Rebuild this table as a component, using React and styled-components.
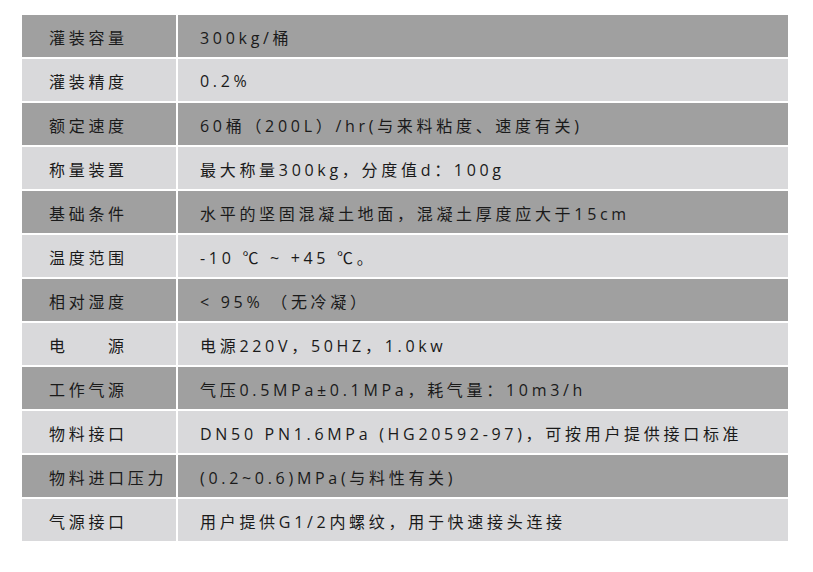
import React from 'react'
import styled, { createGlobalStyle } from 'styled-components'

const GlobalStyle = createGlobalStyle`
  html, body {
    margin: 0;
    padding: 0;
    background: #ffffff;
  }
  body {
    font-family: "Open Sans", "Noto Sans CJK SC", sans-serif;
  }
`

const Page = styled.div`
  width: 813px;
  height: 572px;
  padding: 15px 25px 0 22px;
  box-sizing: border-box;
`

const SpecTable = styled.div`
  display: grid;
  grid-template-columns: 154px 1fr;
  column-gap: 2px;
  row-gap: 2px;
  width: 766px;
`

const Cell = styled.div`
  height: 42px;
  display: flex;
  align-items: center;
  box-sizing: border-box;
  padding-left: ${p => (p.$label ? '27px' : '22px')};
  padding-top: 2px;
  background: ${p => (p.$dark ? '#a0a0a0' : '#d9d9db')};
  color: #1a1a1a;
  font-size: 16px;
  font-weight: 400;
  letter-spacing: 3.7px;
  white-space: pre;
`

const rows = [
  ['灌装容量', '300kg/桶'],
  ['灌装精度', '0.2%'],
  ['额定速度', '60桶（200L）/hr(与来料粘度、速度有关)'],
  ['称量装置', '最大称量300kg，分度值d：100g'],
  ['基础条件', '水平的坚固混凝土地面，混凝土厚度应大于15cm'],
  ['温度范围', '-10 ℃ ~ +45 ℃。'],
  ['相对湿度', '< 95% （无冷凝）'],
  ['电　　源', '电源220V，50HZ，1.0kw'],
  ['工作气源', '气压0.5MPa±0.1MPa，耗气量：10m3/h'],
  ['物料接口', 'DN50 PN1.6MPa (HG20592-97)，可按用户提供接口标准'],
  ['物料进口压力', '(0.2~0.6)MPa(与料性有关)'],
  ['气源接口', '用户提供G1/2内螺纹，用于快速接头连接'],
]

export default function App() {
  return (
    <>
      <GlobalStyle />
      <Page>
        <SpecTable>
          {rows.map(([label, value], i) => (
            <React.Fragment key={label}>
              <Cell $label $dark={i % 2 === 0}>{label}</Cell>
              <Cell $dark={i % 2 === 0}>{value}</Cell>
            </React.Fragment>
          ))}
        </SpecTable>
      </Page>
    </>
  )
}
